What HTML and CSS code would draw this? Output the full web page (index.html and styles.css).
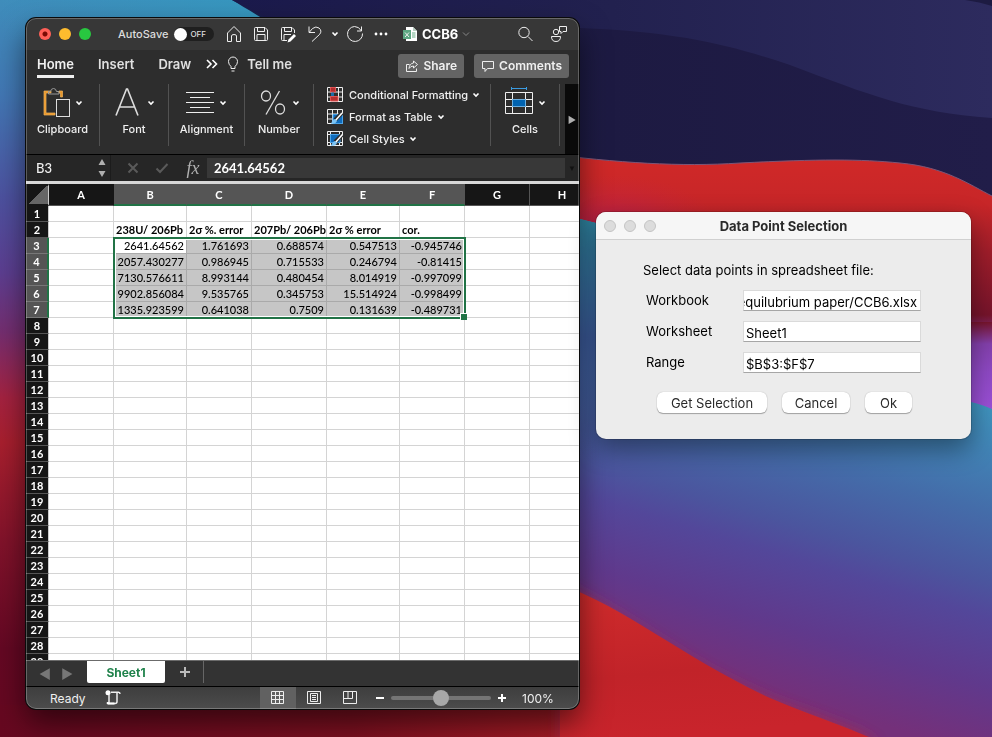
FILE: index.html
```html
<!DOCTYPE html>
<html lang="en">
<head>
<meta charset="utf-8">
<title>CCB6 – Data Point Selection</title>
<link rel="stylesheet" href="styles.css">
</head>
<body>
<svg class="wallpaper" viewBox="0 0 992 737" preserveAspectRatio="none" aria-hidden="true">
  <defs>
    <linearGradient id="left" x1="0" y1="0" x2="0" y2="1">
      <stop offset="0" stop-color="#3f8dbb"/><stop offset=".13" stop-color="#4277b4"/>
      <stop offset=".27" stop-color="#4d519f"/><stop offset=".37" stop-color="#5c3e90"/>
      <stop offset=".45" stop-color="#742e70"/><stop offset=".54" stop-color="#a42240"/>
      <stop offset=".6" stop-color="#a81f2e"/><stop offset=".74" stop-color="#80122a"/>
      <stop offset=".88" stop-color="#640823"/><stop offset="1" stop-color="#660820"/>
    </linearGradient>
    <linearGradient id="floor" x1="0" y1="0" x2="1" y2="0">
      <stop offset="0" stop-color="#660820"/><stop offset=".5" stop-color="#7d1020"/><stop offset="1" stop-color="#c02328"/>
    </linearGradient>
    <linearGradient id="teal" x1="0" y1="0" x2="1" y2="0">
      <stop offset="0" stop-color="#3599c0" stop-opacity="0"/><stop offset="1" stop-color="#3599c0"/>
    </linearGradient>
    <linearGradient id="navy" x1="0" y1="0" x2="1" y2="0">
      <stop offset="0" stop-color="#18204d"/><stop offset=".5" stop-color="#1d1a42"/><stop offset="1" stop-color="#211d49"/>
    </linearGradient>
    <linearGradient id="navyTop" x1="0" y1="0" x2="1" y2="0">
      <stop offset="0" stop-color="#1b1a4c"/><stop offset=".5" stop-color="#22214f"/><stop offset="1" stop-color="#2d2b5e"/>
    </linearGradient>
    <linearGradient id="red" gradientUnits="userSpaceOnUse" x1="0" y1="155" x2="0" y2="350">
      <stop offset="0" stop-color="#d12928"/><stop offset=".25" stop-color="#c72628"/><stop offset=".5" stop-color="#9f1d2a"/><stop offset=".82" stop-color="#76142b"/><stop offset="1" stop-color="#8a45bd"/>
    </linearGradient>
    <radialGradient id="magenta" gradientUnits="userSpaceOnUse" cx="610" cy="230" r="110" gradientTransform="translate(0 115) scale(1 .5)">
      <stop offset="0" stop-color="#b92050"/><stop offset="1" stop-color="#c4253a" stop-opacity="0"/>
    </radialGradient>
    <linearGradient id="violet" x1="0" y1="0" x2="0" y2="1">
      <stop offset="0" stop-color="#76142b"/><stop offset=".22" stop-color="#8340ac"/><stop offset=".5" stop-color="#8e49c4"/><stop offset="1" stop-color="#a052de"/>
    </linearGradient>
    <linearGradient id="wave" gradientUnits="userSpaceOnUse" x1="992" y1="410" x2="896" y2="729">
      <stop offset="0" stop-color="#3f92bd"/><stop offset=".3" stop-color="#446ca9"/>
      <stop offset=".5" stop-color="#4b559e"/><stop offset=".6" stop-color="#53479a"/><stop offset=".8" stop-color="#60398c"/><stop offset="1" stop-color="#74307a"/>
    </linearGradient>
    <linearGradient id="edge" gradientUnits="userSpaceOnUse" x1="0" y1="214" x2="0" y2="460">
      <stop offset="0" stop-color="#2f8aa5"/><stop offset=".5" stop-color="#3e5ea0"/><stop offset="1" stop-color="#4b509a" stop-opacity="0"/>
    </linearGradient>
    <linearGradient id="redBase" x1="0" y1="0" x2=".2" y2="1">
      <stop offset="0" stop-color="#d02c2c"/><stop offset=".6" stop-color="#c12329"/><stop offset="1" stop-color="#c9242c"/>
    </linearGradient>
    <filter id="soft" x="-20%" y="-20%" width="140%" height="140%"><feGaussianBlur stdDeviation="7"/></filter>
  </defs>
  <rect width="992" height="737" fill="url(#left)"/>
  <rect y="705" width="700" height="32" fill="url(#floor)"/>
  <rect width="300" height="40" fill="url(#teal)"/>
  <path d="M232 0C300 40 420 120 560 200H992V0Z" fill="url(#navy)"/>
  <path d="M232 0L270 20C420 20 520 22 580 28C680 32 730 45 790 65C870 95 910 112 992 118V0Z" fill="url(#navyTop)"/>
  <path d="M965 0Q980 2 992 6V0Z" fill="#1d1b42"/>
  <path d="M540 153C620 163 680 167 740 163C820 159 860 159 900 163C945 167 970 185 992 196V420H540Z" fill="url(#red)"/>
  <path d="M560 175H760V300H560Z" fill="url(#magenta)"/>
  <path d="M540 153C620 163 680 167 740 163C820 159 860 159 900 163C945 167 970 185 992 196" class="rim"/>
  <rect x="930" y="322" width="62" height="100" fill="url(#violet)"/>
  <path d="M560 214L600 224L960 400Q976 402 992 409V737H560Z" fill="url(#wave)"/>
  <path d="M560 214L600 224V460H560Z" fill="url(#edge)"/>
  <path d="M560 584C640 622 690 672 790 708C830 722 860 732 880 745H560Z" fill="#a82b4c" filter="url(#soft)"/>
  <path d="M560 584C630 610 680 656 770 698C810 715 850 728 880 742H560Z" fill="url(#redBase)"/>
</svg>

<main class="desktop">
<section class="excel" aria-label="CCB6 workbook">
  <header class="titlebar">
    <div class="lights"><i class="red"></i><i class="amber"></i><i class="green"></i></div>
    <label class="autosave">AutoSave <input type="checkbox" role="switch"><span class="switch">OFF</span></label>
    <div class="tools">
      <button aria-label="Home"><svg viewBox="0 0 18 18"><path d="M2.500 8L9 1.500L15.500 8V16.500H11.500V11Q11.500 9.500 9 9.500T6.500 11V16.500H2.500Z"/></svg></button>
      <button aria-label="Save"><svg viewBox="0 0 18 18"><path d="M2.500 3.500Q2.500 2.500 3.500 2.500H13L15.500 5V14.500Q15.500 15.500 14.500 15.500H3.500Q2.500 15.500 2.500 14.500ZM5.500 2.500V6.500H12.500V2.500M5 15.500V9.500H13V15.500"/></svg></button>
      <button aria-label="Save as"><svg viewBox="0 0 18 18"><path d="M8 15.500H3.500Q2.500 15.500 2.500 14.500V3.500Q2.500 2.500 3.500 2.500H13L15.500 5V8M5.500 2.500V6.500H12.500V2.500M5 15.500V9.500H12"/><path d="M9.500 14.500L15 9L17 11L11.500 16.500L8.500 17.500Z" fill="#fff" stroke="none"/></svg></button>
    </div>
    <div class="history">
      <button aria-label="Undo"><svg viewBox="0 0 18 18"><path d="M3 1.500V7.500H9M3.500 7L6.500 3.500Q10 .8 13 3Q16.500 6 13.500 9.500L6 16.500"/></svg></button>
      <button class="tiny" aria-label="Undo list"><svg viewBox="0 0 8 8"><path class="bold" d="M1.500 2.500L4 5L6.500 2.500"/></svg></button>
      <button aria-label="Redo"><svg viewBox="0 0 18 18"><path d="M15.500 1.500V6H11M15.500 6Q13 1.500 8.500 1.500A7.500 7.500 0 1 0 16.500 8.500"/></svg></button>
      <button aria-label="More"><svg viewBox="0 0 18 18"><g fill="#fff" stroke="none"><circle cx="4" cy="9" r="1.400"/><circle cx="9" cy="9" r="1.400"/><circle cx="14" cy="9" r="1.400"/></g></svg></button>
    </div>
    <h1 class="doc"><svg viewBox="0 0 16 16"><g stroke="none"><path d="M4 1H11L15 5V15H4Z" fill="#fff"/><path d="M11 1V5H15Z" fill="#b9cfc3"/><path d="M10 7H13.500M10 9H13.500M10 11H13.500" stroke="#69ac86"/><rect x="1" y="4" width="8" height="9" fill="#5da782"/></g><path d="M3 6.500L7 11M7 6.500L3 11"/></svg>CCB6<svg class="tiny-icon" viewBox="0 0 8 8"><path d="M1 2.500L4 5.500L7 2.500" stroke="#888"/></svg></h1>
    <div class="right-tools">
      <button aria-label="Search"><svg viewBox="0 0 18 18"><circle cx="8" cy="7.500" r="5.200"/><path d="M12 11.500L16.500 16"/></svg></button>
      <button aria-label="Share status"><svg viewBox="0 0 18 18"><circle cx="6" cy="7" r="2.700"/><path d="M1.500 11.500H10.500Q10.500 16.500 6 16.500T1.500 11.500ZM9.500 1.500H16.500V6.500H13L11 8.500V6.500H9.500Z"/></svg></button>
    </div>
  </header>

  <nav class="tabs">
    <a href="#home" class="active">Home</a><a href="#insert">Insert</a><a href="#draw">Draw</a>
    <button class="more" aria-label="More tabs"><svg viewBox="0 0 14 14"><path class="bold" d="M2 3L6 7L2 11M7.500 3L11.500 7L7.500 11"/></svg></button>
    <button class="tell"><svg viewBox="0 0 14 18"><path d="M5 13.500V11.500Q2.500 9.500 2.500 6.500A4.500 4.500 0 0 1 11.500 6.500Q11.500 9.500 9 11.500V13.500ZM5.500 16H8.500"/></svg>Tell me</button>
    <span class="actions">
      <button><svg viewBox="0 0 14 14"><path d="M4.500 5.500H1.500V12.500H11.500V9.500M8.500 2L12.500 5.500L8.500 9V7Q5.500 7 4 9.500Q4.500 4.500 8.500 4Z"/></svg>Share</button>
      <button><svg viewBox="0 0 14 14"><path d="M1.500 2.500H12.500V9.500H6.500L4 12.500V9.500H1.500Z"/></svg>Comments</button>
    </span>
  </nav>

  <div class="ribbon">
    <button class="group w-a"><span class="pic"><svg class="big" viewBox="0 0 28 32"><path d="M9 4H2V28H13V26H4V6H9ZM17 4H20.500V10H18.500V6H17Z" fill="#e8962a" stroke="#f3b65a" stroke-width=".7"/><path d="M6.500 7V4.500H8.500Q9 1.500 11.500 1.500T14.500 4.500H17V7Z" stroke="#9a9a9a"/><rect x="14.500" y="12.500" width="13" height="17" stroke="#ddd" fill="#2d2d2d"/></svg><svg class="chev" viewBox="0 0 8 8"><path class="bold" d="M1.500 2.500L4 5L6.500 2.500"/></svg></span>Clipboard</button>
    <button class="group w-b"><span class="pic"><svg class="big" viewBox="0 0 28 32"><path d="M2 28.500L12.500 2H13.500L24 28.500M5.500 20H20.500" stroke-width="1.600" stroke="#ddd"/></svg><svg class="chev" viewBox="0 0 8 8"><path class="bold" d="M1.500 2.500L4 5L6.500 2.500"/></svg></span>Font</button>
    <button class="group w-c"><span class="pic"><svg class="big" viewBox="0 0 28 32"><path d="M0 5.500H28M4 10.500H24M0 15.500H28M4 20.500H24M0 25.500H28"/></svg><svg class="chev" viewBox="0 0 8 8"><path class="bold" d="M1.500 2.500L4 5L6.500 2.500"/></svg></span>Alignment</button>
    <button class="group w-b"><span class="pic"><svg class="big" viewBox="0 0 28 32"><g stroke="#ddd" stroke-width="1.300"><ellipse cx="7" cy="9" rx="4.500" ry="5"/><ellipse cx="21" cy="22" rx="4.500" ry="5"/><path d="M20.500 4L7 27.500"/></g></svg><svg class="chev" viewBox="0 0 8 8"><path class="bold" d="M1.500 2.500L4 5L6.500 2.500"/></svg></span>Number</button>
    <div class="group styles">
      <button><svg viewBox="0 0 16 16"><path d="M.5.500H15.500V14.500H.5ZM.5 5H15.500M.5 10H15.500M4.500.500V14.500M11.500.500V14.500"/><path d="M3.500.500H8.500V5H3.500ZM3.500 9.500H11V14H3.500Z" fill="#b32e2e" stroke="#e05252"/><path d="M4 5.500H7V9H4Z" fill="#1b6ca8" stroke="none"/></svg>Conditional Formatting<svg class="chev" viewBox="0 0 8 8"><path class="bold" d="M1.500 2.500L4 5L6.500 2.500"/></svg></button>
      <button><svg viewBox="0 0 16 16"><path d="M.5.500H15.500V14.500H.5ZM.5 5H15.500M.5 10H15.500M5.500.500V14.500M10.500.500V14.500"/><path d="M6 5.500H15.500V14.500H6Z" fill="#0f6cbd" stroke="#4aa3e8"/><path d="M15 4L8 11" stroke="#2d2d2d" stroke-width="4"/><path d="M15 4L8.500 11.500" stroke="#fff" stroke-width="1.600"/><path d="M8 10Q5 11 4 15Q9 15 10 12Z" fill="#7cc4f5" stroke="none"/></svg>Format as Table<svg class="chev" viewBox="0 0 8 8"><path class="bold" d="M1.500 2.500L4 5L6.500 2.500"/></svg></button>
      <button><svg viewBox="0 0 16 16"><path d="M.5.500H15.500V14.500H.5ZM.5 3.500H15.500M3.500.500V14.500M12.500.500V14.500M.5 11.500H15.500"/><path d="M3.500 3.500H13V11.500H3.500Z" fill="#0f6cbd" stroke="#4aa3e8"/><path d="M15 4L8 11" stroke="#2d2d2d" stroke-width="4"/><path d="M15 4L8.500 11.500" stroke="#fff" stroke-width="1.600"/><path d="M8 10Q5 11 4 15Q9 15 10 12Z" fill="#7cc4f5" stroke="none"/></svg>Cell Styles<svg class="chev" viewBox="0 0 8 8"><path class="bold" d="M1.500 2.500L4 5L6.500 2.500"/></svg></button>
    </div>
    <button class="group w-b"><span class="pic"><svg class="big" viewBox="0 0 28 32"><path d="M6.500 0V3M21.500 0V3M6.500 1.500H21.500" stroke="#3b9be0"/><path d="M.5 5.500H27.500V26.500H.5ZM.5 12.500H27.500M.5 19.500H27.500M7.500 5.500V26.500M20.500 5.500V26.500"/><rect x="7.500" y="12.500" width="13" height="7" fill="#0063b1" stroke="#69aee0"/></svg><svg class="chev" viewBox="0 0 8 8"><path class="bold" d="M1.500 2.500L4 5L6.500 2.500"/></svg></span>Cells</button>
    <button class="scroll" aria-label="Scroll ribbon">▶</button>
  </div>

  <div class="formula">
    <input class="name" aria-label="Name box" value="B3">
    <button class="steps" aria-label="Name list"><svg viewBox="0 0 8 20"><path d="M4 1L7.500 7H.5ZM4 19L7.500 13H.5Z" fill="#b0b0b0" stroke="none"/></svg></button>
    <button class="op" aria-label="Cancel entry"><svg viewBox="0 0 14 14"><path d="M2.500 2.500L11.500 11.500M11.500 2.500L2.500 11.500" stroke="#5a5a5a" stroke-width="2"/></svg></button>
    <button class="op" aria-label="Accept entry"><svg viewBox="0 0 14 14"><path d="M1.500 7.500L5 11L12.500 3" stroke="#5a5a5a" stroke-width="2"/></svg></button>
    <button class="fx" aria-label="Insert function">fx</button>
    <input class="value" aria-label="Formula bar" value="2641.64562">
    <button class="expand" aria-label="Expand formula bar">▼</button>
  </div>

  <div class="sheet">
    <table>
      <colgroup><col class="c-n"><col class="c-s"><col class="c-m"><col class="c-s"><col class="c-l"><col class="c-m"><col class="c-s"><col class="c-s"><col class="c-s"></colgroup>
      <thead><tr><th class="corner" aria-label="Select all"></th><th>A</th><th class="on">B</th><th class="on">C</th><th class="on">D</th><th class="on">E</th><th class="on">F</th><th>G</th><th>H</th></tr></thead>
      <tbody>
      <tr><th>1<td><td><td><td><td><td><td><td>
      <tr class="heads"><th>2<td><td>238U/ 206Pb<td>2σ %. error<td>207Pb/ 206Pb<td>2σ % error<td>cor.<td><td>
      <tr class="data"><th>3<td><td class="cur">2641.64562<td>1.761693<td>0.688574<td>0.547513<td>-0.945746<td><td>
      <tr class="data"><th>4<td><td>2057.430277<td>0.986945<td>0.715533<td>0.246794<td>-0.81415<td><td>
      <tr class="data"><th>5<td><td>7130.576611<td>8.993144<td>0.480454<td>8.014919<td>-0.997099<td><td>
      <tr class="data"><th>6<td><td>9902.856084<td>9.535765<td>0.345753<td>15.514924<td>-0.998499<td><td>
      <tr class="data"><th>7<td><td>1335.923599<td>0.641038<td>0.7509<td>0.131639<td>-0.489731<td><td>
      <tr><th>8<td><td><td><td><td><td><td><td>
      <tr><th>9<td><td><td><td><td><td><td><td>
      <tr><th>10<td><td><td><td><td><td><td><td>
      <tr><th>11<td><td><td><td><td><td><td><td>
      <tr><th>12<td><td><td><td><td><td><td><td>
      <tr><th>13<td><td><td><td><td><td><td><td>
      <tr><th>14<td><td><td><td><td><td><td><td>
      <tr><th>15<td><td><td><td><td><td><td><td>
      <tr><th>16<td><td><td><td><td><td><td><td>
      <tr><th>17<td><td><td><td><td><td><td><td>
      <tr><th>18<td><td><td><td><td><td><td><td>
      <tr><th>19<td><td><td><td><td><td><td><td>
      <tr><th>20<td><td><td><td><td><td><td><td>
      <tr><th>21<td><td><td><td><td><td><td><td>
      <tr><th>22<td><td><td><td><td><td><td><td>
      <tr><th>23<td><td><td><td><td><td><td><td>
      <tr><th>24<td><td><td><td><td><td><td><td>
      <tr><th>25<td><td><td><td><td><td><td><td>
      <tr><th>26<td><td><td><td><td><td><td><td>
      <tr><th>27<td><td><td><td><td><td><td><td>
      <tr><th>28<td><td><td><td><td><td><td><td>
      <tr><th>29<td><td><td><td><td><td><td><td>
      </tbody>
    </table>
    <div class="selection"></div>
  </div>

  <div class="sheets">
    <button class="nav" aria-label="Previous sheet">◀</button><button class="nav" aria-label="Next sheet">▶</button>
    <button class="sheet-tab">Sheet1</button>
    <button class="add" aria-label="Add sheet"><svg viewBox="0 0 12 12"><path d="M6 1V11M1 6H11" stroke="#bbb" stroke-width="2"/></svg></button>
  </div>

  <footer class="status">
    <span class="ready">Ready</span>
    <button class="macro" aria-label="Record macro"><svg viewBox="0 0 16 16"><g stroke-width="1.500"><path d="M4 5V12.700H2M6 2.200H13.500Q15 2.200 15 4M12 2.500V11.500Q12 13.500 10 13.500H3"/></g><circle cx="3" cy="2.800" r="2.500" fill="#fff" stroke="none"/><path d="M1.500 12.500H9.500V14.500H3Q1.500 14.500 1.500 12.500Z" fill="#fff" stroke="none"/></svg></button>
    <div class="views">
      <button class="picked" aria-label="Normal view"><svg viewBox="0 0 14 14"><path d="M.5.500H12.500V12.500H.5ZM.5 4.500H12.500M.5 8.500H12.500M4.500.500V12.500M8.500.500V12.500"/></svg></button>
      <button aria-label="Page layout"><svg viewBox="0 0 14 14"><path d="M.5.500H13.500V12.500H.5ZM3.500 2.500H10.500V10.500H3.500ZM5 4.500H9M5 6.500H9M5 8.500H9"/></svg></button>
      <button aria-label="Page break"><svg viewBox="0 0 14 14"><path d="M.5.500H13.500V12.500H.5ZM.5 7.500H9.500V.500M5 .500V7.500"/></svg></button>
    </div>
    <div class="zoom">
      <button aria-label="Zoom out"><svg viewBox="0 0 8 8"><path d="M0 4H8" stroke-width="2"/></svg></button>
      <input type="range" min="0" max="200" value="100" aria-label="Zoom">
      <button aria-label="Zoom in"><svg viewBox="0 0 8 8"><path d="M0 4H8M4 0V8" stroke-width="2"/></svg></button>
      <output>100%</output>
    </div>
  </footer>
</section>

<section class="dialog" role="dialog" aria-labelledby="dlg">
  <header><div class="lights"><i></i><i></i><i></i></div><h2 id="dlg">Data Point Selection</h2></header>
  <form>
    <p>Select data points in spreadsheet file:</p>
    <div class="field"><label for="wb">Workbook</label><input id="wb" class="tail" value="equilubrium paper/CCB6.xlsx"></div>
    <div class="field"><label for="ws">Worksheet</label><input id="ws" value="Sheet1"></div>
    <div class="field"><label for="rg">Range</label><input id="rg" value="$B$3:$F$7"></div>
    <div class="buttons"><button type="button" class="get">Get Selection</button><button type="button" class="cancel">Cancel</button><button type="button" class="ok">Ok</button></div>
  </form>
</section>
</main>
</body>
</html>
```
FILE: styles.css
```css
* { box-sizing: border-box; }
body { margin: 0; font-family: Inter, "Liberation Sans", sans-serif; background: #1d1a42; }
button, input { font: inherit; color: inherit; border: 0; padding: 0; margin: 0; background: none; border-radius: 0; outline: 0; }
svg { display: block; fill: none; stroke: #eee; flex: none; }
svg .bold { stroke: #fff; stroke-width: 1.6; }
h1, h2, p { margin: 0; }
.wallpaper { position: fixed; inset: 0; width: 100%; height: 100%; stroke: none; }
.wallpaper .rim { fill: none; stroke: #7c5577; }
.desktop { position: relative; height: 100vh; overflow: hidden; }

.excel {
  position: absolute; left: 26px; top: 18px; bottom: 28px; width: 553px;
  display: flex; flex-direction: column; overflow: hidden;
  color: #f0f0f0; background: #2d2d2d; border-radius: 10px; font-size: 11px; font-weight: 500;
  box-shadow: 0 0 0 1px #0a0a0a, 0 14px 30px rgba(0, 0, 0, .55);
}
.excel::after { content: ""; position: absolute; inset: 0; border: 1px solid rgba(255, 255, 255, .25); border-radius: 10px; pointer-events: none; }

.lights { display: flex; gap: 8px; }
.lights i { width: 12px; height: 12px; border-radius: 50%; background: #dcdcdc; border: 1px solid #c4c4c4; }
.lights .red { background: radial-gradient(circle, #7a0a05 2px, #ff5f57 3px); border: 0; }
.lights .amber { background: #febc2e; border: 0; }
.lights .green { background: #28c840; border: 0; }

.titlebar { display: flex; align-items: center; height: 32px; flex: none; padding: 0 11px 0 13px; background: #373737; }
.titlebar button svg { width: 18px; height: 18px; }
.titlebar .tiny svg, .titlebar .tiny-icon { width: 8px; height: 8px; }
.autosave { display: flex; align-items: center; gap: 6px; margin-left: 27px; width: 96px; white-space: nowrap; color: #ddd; }
.autosave input { position: absolute; opacity: 0; }
.switch { display: flex; align-items: center; width: 40px; height: 14px; border-radius: 7px; background: #1f1f1f; font-size: 8px; gap: 3px; flex: none; }
.switch::before { content: ""; width: 13px; height: 13px; border-radius: 50%; background: #fff; }
.tools { display: flex; gap: 9px; margin-left: 11px; }
.history { display: flex; align-items: center; gap: 8px; margin-left: 9px; }
.history .tiny { margin: 0 -1px; }
.doc { display: flex; align-items: center; gap: 4px; margin-left: 12px; font-size: 13px; font-weight: 700; color: #fff; }
.doc svg:first-child { width: 16px; height: 16px; }
.right-tools { display: flex; gap: 16px; margin-left: auto; }

.tabs { display: flex; align-items: flex-start; height: 34px; flex: none; padding: 4px 10px 0 11px; font-size: 13px; line-height: 20px; font-weight: 600; }
.tabs a { color: #e0e0e0; text-decoration: none; margin-right: 24px; height: 24px; }
.tabs a.active { border-bottom: 3px solid #f0f0f0; color: #f0f0f0; }
.tabs a:nth-child(3) { margin-right: 14px; }
.more svg { width: 14px; height: 20px; }
.tell { display: flex; align-items: center; gap: 7px; margin-left: 7px; color: #e0e0e0; }
.tell svg { width: 14px; height: 18px; }
.actions { display: flex; gap: 10px; margin-left: auto; }
.actions button { display: flex; align-items: center; gap: 4px; height: 24px; padding: 0 7px; background: #646464; border-radius: 3px; font-size: 12px; }
.actions svg { width: 14px; height: 14px; }

.ribbon { display: flex; height: 71px; flex: none; border-bottom: 1px solid #000; }
.group { display: flex; flex-direction: column; align-items: center; justify-content: flex-start; height: 62px; border-right: 1px solid #525252; line-height: 14px; flex: none; }
.w-a { width: 74px; }
.w-b { width: 69px; }
.w-c { width: 76px; }
.pic { display: flex; align-items: center; gap: 5px; height: 38px; }
.big { width: 28px; height: 32px; }
.chev { width: 8px; height: 8px; }
.styles { width: 177px; align-items: flex-start; padding-left: 13px; }
.styles button { display: flex; align-items: center; gap: 6px; height: 22px; flex: none; white-space: nowrap; }
.styles button svg:first-child { width: 16px; height: 16px; }
.styles .chev { margin-left: -2px; }
.scroll { margin-left: auto; width: 14px; height: 70px; background: #0a0a0a; color: #b0b0b0; font-size: 9px; }

.formula { display: flex; align-items: center; height: 29px; flex: none; padding-left: 10px; background: #262626; border-bottom: 3px solid #d8d8d8; font-family: Lato, sans-serif; font-size: 13px; }
.name { width: 62px; }
.steps { width: 13px; height: 26px; border-right: 1px solid #1c1c1c; padding-right: 4px; }
.steps svg { width: 8px; height: 20px; }
.op { margin-left: 15px; }
.op svg { width: 14px; height: 14px; }
.fx { width: 38px; padding-left: 10px; font: italic 18px/18px "Liberation Serif", serif; color: #b0b0b0; }
.value { flex: 1; min-width: 0; height: 20px; padding-left: 7px; background: #383838; color: #fff; font-weight: 700; }
.expand { width: 14px; font-size: 8px; color: #111; }

.sheet { position: relative; flex: 1; min-height: 0; overflow: hidden; background: #fff; font-family: Lato, sans-serif; color: #000; }
table { table-layout: fixed; width: 568px; border-collapse: separate; border-spacing: 0; }
.c-n { width: 23px; } .c-s { width: 65px; } .c-m { width: 73px; } .c-l { width: 75px; }
thead th { height: 22px; padding: 0; background: #161616; color: #fff; border-right: 1px solid #161616; border-bottom: 1px solid #555; font-size: 11px; }
thead th:nth-child(8) { border-right-color: #555; }
thead .on { background: #555; border-right-color: #555; border-bottom: 2px solid #217346; }
thead .corner { background: linear-gradient(135deg, #161616 50%, #666 50%); border: 2px solid #161616; border-right: 1px solid #ccc; }
tbody th { height: 16px; padding: 0; background: #161616; color: #fff; border-right: 1px solid #ccc; border-bottom: 1px solid #555; font-size: 11px; line-height: 15px; }
td { height: 16px; padding: 0 2px; border-right: 1px solid #d4d4d4; border-bottom: 1px solid #d4d4d4; font-size: 11px; line-height: 15px; white-space: nowrap; }
.heads td { font-weight: 700; }
.data th { background: #555; border-bottom-color: #777; border-right: 2px solid #217346; }
.data td:nth-child(n+3):nth-child(-n+7) { text-align: right; background: #c6c6c6; border-color: #aaa; }
.data td.cur:nth-child(n+3):nth-child(-n+7) { background: #fff; }
.selection { position: absolute; left: 87px; top: 53px; width: 353px; height: 82px; border: 2px solid #217346; box-shadow: inset 0 0 0 1px #fff; }
.selection::after { content: ""; position: absolute; right: -3px; bottom: -3px; width: 6px; height: 6px; background: #217346; border: solid #fff; border-width: 1px 0 0 1px; }

.sheets { display: flex; height: 27px; flex: none; background: #333; border-top: 1px solid #6b6b6b; border-bottom: 1px solid #000; padding-left: 8px; }
.nav { width: 22px; font-size: 13px; color: #777; }
.sheet-tab { width: 78px; height: 22px; margin-left: 9px; background: #fff; color: #21834c; font-size: 12px; font-weight: 700; border-radius: 0 0 2px 2px; }
.add { width: 39px; height: 22px; padding-left: 14px; border-right: 1px solid #666; }
.add svg { width: 12px; height: 12px; }

.status { display: flex; align-items: center; height: 22px; flex: none; padding-left: 24px; background: linear-gradient(#3e3e3e, #4c4c4c); font-size: 12px; font-weight: 400; }
.ready { width: 55px; }
.macro svg { width: 16px; height: 16px; }
.views { display: flex; height: 22px; margin-left: 139px; }
.views button { display: grid; place-items: center; width: 36px; }
.views .picked { background: #616161; }
.views svg { width: 14px; height: 14px; }
.zoom { display: flex; align-items: center; gap: 7px; margin-left: 8px; }
.zoom svg { width: 8px; height: 8px; stroke: #fff; }
.zoom input { appearance: none; width: 100px; height: 4px; border-radius: 2px; background: #757575; }
.zoom input::-webkit-slider-thumb { appearance: none; width: 16px; height: 16px; border-radius: 50%; background: #a8a8a8; }
.zoom output { margin-left: 9px; }

.dialog { position: absolute; left: 596px; top: 212px; width: 375px; background: #ececec; border-radius: 10px; overflow: hidden; color: #000; font-size: 13px; box-shadow: 0 0 0 1px rgba(0, 0, 0, .15), 0 10px 26px rgba(0, 0, 0, .4); }
.dialog header { display: grid; grid-template-columns: 62px 1fr 70px; align-items: center; height: 28px; padding-left: 8px; background: #f6f6f6; border-bottom: 1px solid #d0d0d0; }
.dialog h2 { font-size: 13px; font-weight: 700; color: #2a2a2a; text-align: center; }
.dialog form { padding: 20px 50px 26px 47px; }
.dialog p { line-height: 20px; margin-bottom: 10px; white-space: nowrap; }
.field { display: flex; align-items: center; justify-content: space-between; padding-left: 3px; margin-bottom: 10px; line-height: 18px; }
.field label { padding-bottom: 2px; }
.field input { width: 178px; height: 21px; padding: 2px 2px 0; background: #fff; border: 1px solid #dadada; border-bottom-color: #a6a6a6; }
.field .tail { direction: rtl; padding-right: 3px; padding-left: 0; }
.buttons { display: flex; gap: 15px; padding-left: 14px; margin-top: 19px; }
.buttons button { height: 21px; background: #fff; color: #2a2a2a; border-radius: 6px; box-shadow: 0 0 1px rgba(0, 0, 0, .3), 0 1px 1px rgba(0, 0, 0, .3); }
.get { width: 110px; }
.cancel { width: 68px; }
.ok { width: 47px; }
```
